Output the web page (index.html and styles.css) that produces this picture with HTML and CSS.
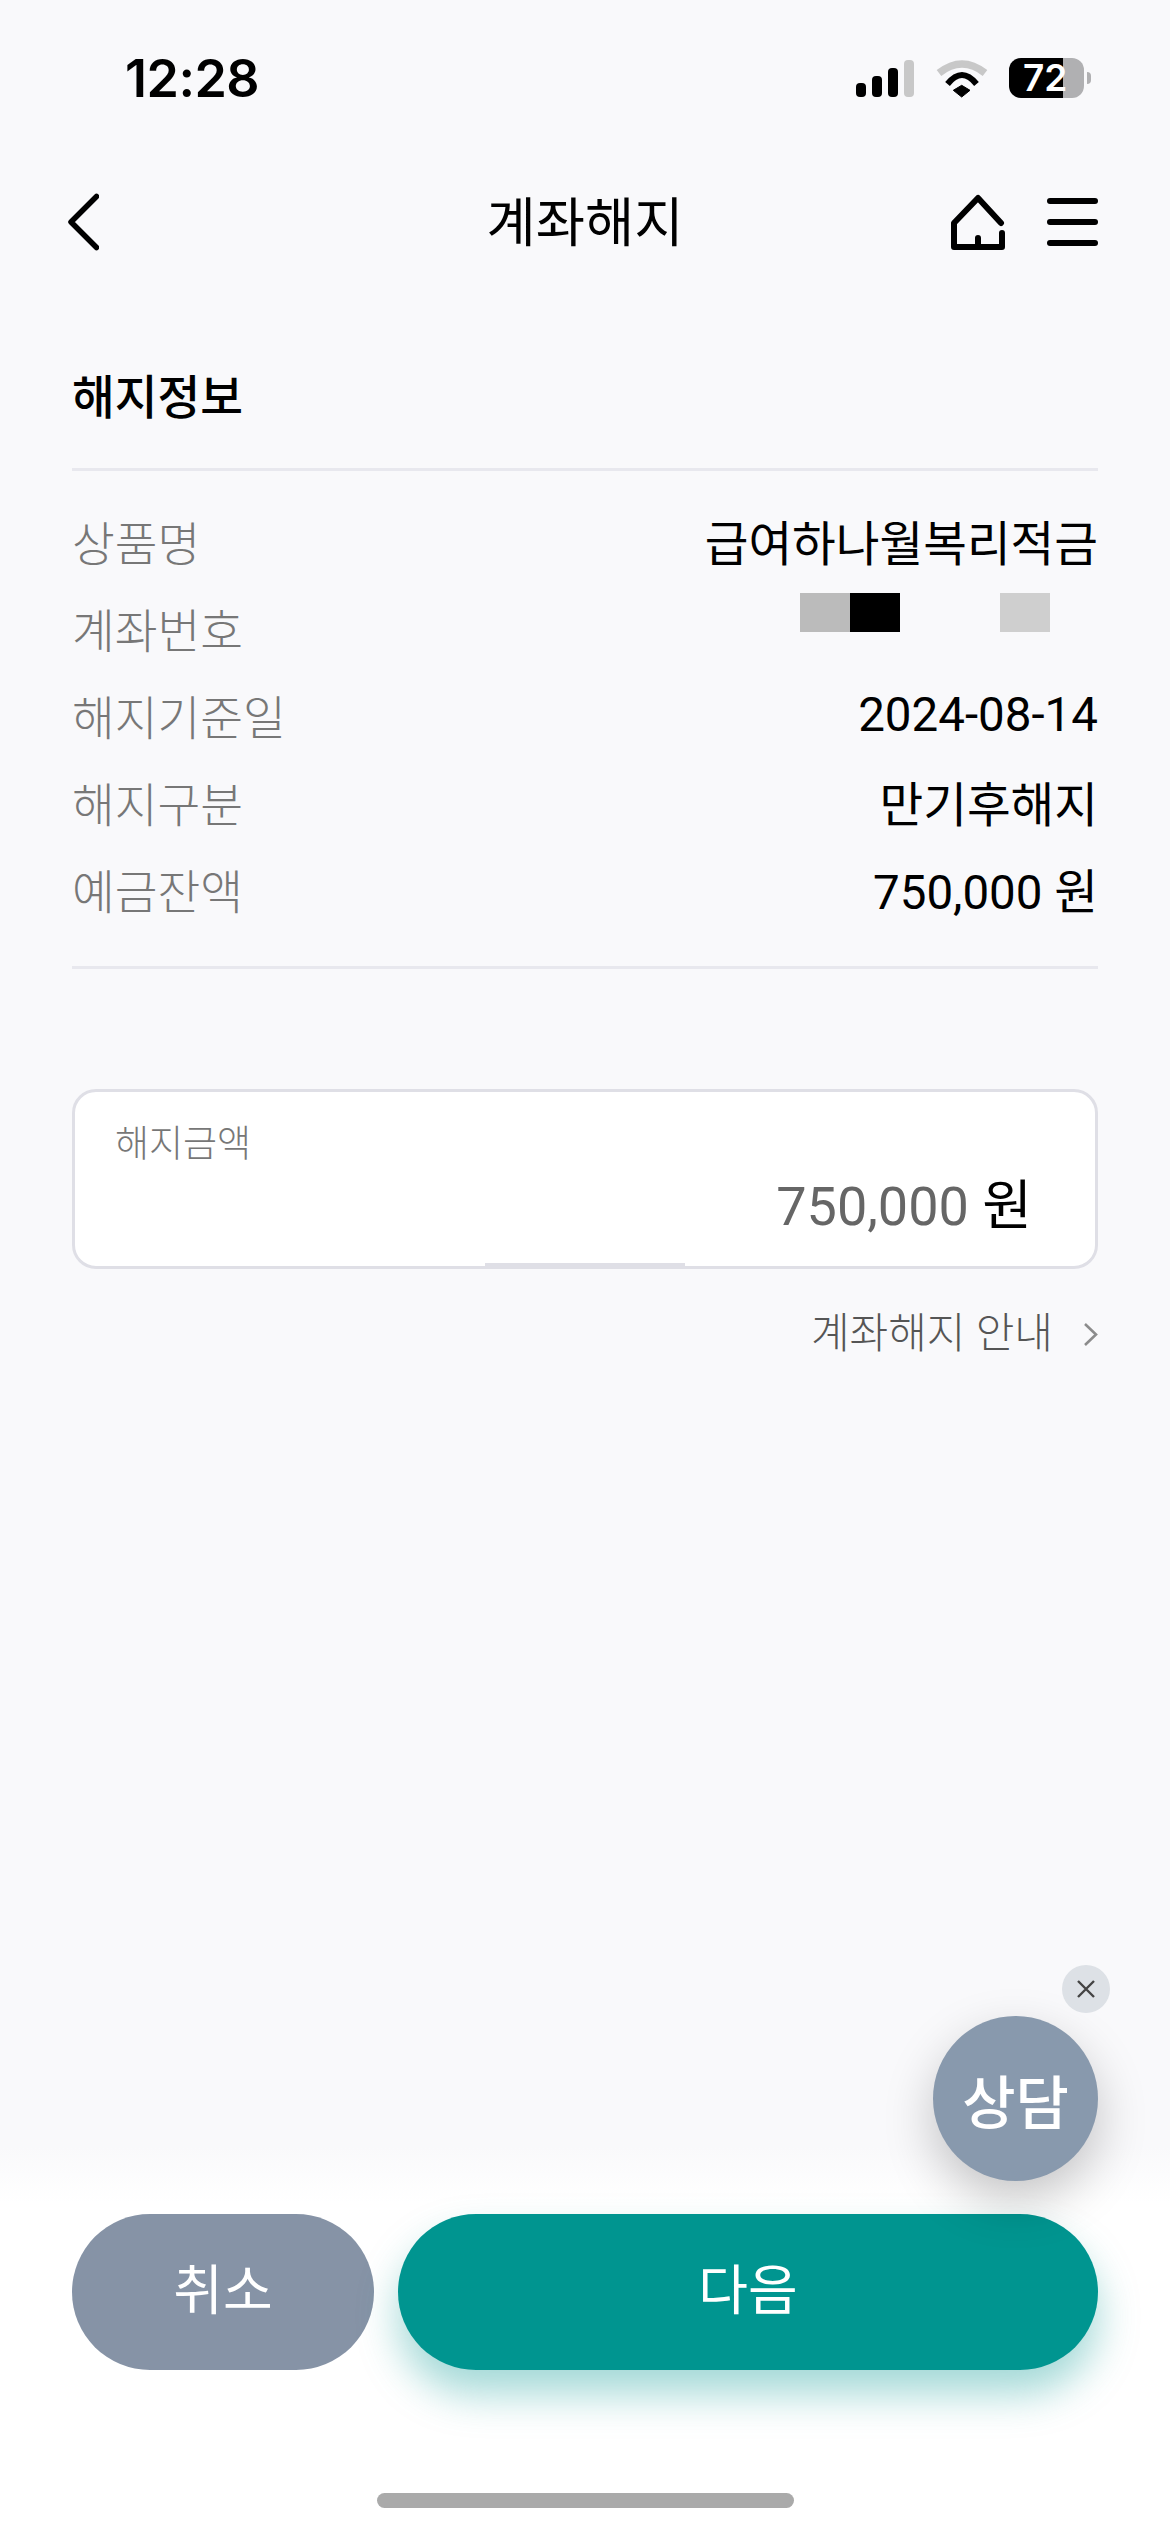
FILE: index.html
```html
<!DOCTYPE html>
<html lang="ko">
<head>
	<meta charset="UTF-8">
	<title>계좌해지</title>
	<link rel="stylesheet" href="styles.css">
</head>
<body>
<div class="screen">
	<div class="status">
		<span class="time">12:28</span>
		<div class="status_icons">
			<div class="signal">
				<i class="s1"></i><i class="s2"></i><i class="s3"></i><i class="s4"></i>
			</div>
			<svg class="wifi" width="52" height="44" viewBox="0 0 52 44">
				<path d="M3 17Q26 -1 49 17" fill="none" stroke="#c8c8c8" stroke-width="7.5"/>
				<path d="M11.5 28Q26 10 40.5 28" fill="none" stroke="#000" stroke-width="6"/>
				<path d="M17.3 34.3L25.7 29.3L34 34.3L25.7 41Z" fill="#000" stroke="#000" stroke-linejoin="round"/>
			</svg>
			<div class="battery"><span>72</span></div>
			<i class="battery_nub"></i>
		</div>
	</div>

	<div class="nav">
		<svg class="back" width="31" height="58" viewBox="0 0 31 58">
			<path d="M28.5 3.5L3 29L28.5 54.5" fill="none" stroke="#000" stroke-width="5.5" stroke-linecap="round" stroke-linejoin="round"/>
		</svg>
		<h1>계좌해지</h1>
		<div class="nav_right">
			<svg width="56" height="56" viewBox="0 0 56 56">
				<path d="M51 29L28 4L4 29V53H52V39M28 53V44" fill="none" stroke="#000" stroke-width="6" stroke-linecap="round" stroke-linejoin="round"/>
			</svg>
			<div class="menu"><i></i><i></i><i></i></div>
		</div>
	</div>

	<div class="content">
		<h2>해지정보</h2>
		<div class="info">
			<div class="row"><span class="key">상품명</span><span class="val">급여하나월복리적금</span></div>
			<div class="row"><span class="key">계좌번호</span>
				<div class="masked">
					<i class="m_gray"></i><i class="m_black"></i><i class="m_none"></i><i class="m_light"></i><i class="m_end"></i>
				</div>
			</div>
			<div class="row"><span class="key">해지기준일</span><span class="val">2024-08-14</span></div>
			<div class="row"><span class="key">해지구분</span><span class="val">만기후해지</span></div>
			<div class="row"><span class="key">예금잔액</span><span class="val">750,000 원</span></div>
		</div>

		<div class="amount">
			<label>해지금액</label>
			<div class="amount_val"><span class="num">750,000</span> <span class="unit">원</span></div>
			<i class="notch"></i>
		</div>
		<div class="guide">
			<span>계좌해지 안내</span>
			<svg width="15" height="25" viewBox="0 0 15 25">
				<path d="M2 2L13 12.5L2 23" fill="none" stroke="#8c8c8c" stroke-width="2.6"/>
			</svg>
		</div>
	</div>

	<div class="footer">
		<div class="buttons">
			<button class="btn_cancel">취소</button>
			<button class="btn_next">다음</button>
		</div>
		<div class="home_bar"></div>
	</div>

	<button class="chat">상담</button>
	<button class="chat_close">
		<svg width="20" height="20" viewBox="0 0 20 20">
			<path d="M2 2L18 18M18 2L2 18" stroke="#444" stroke-width="2.4"/>
		</svg>
	</button>
</div>
</body>
</html>
```
FILE: styles.css
```css
* {
	box-sizing: border-box;
}
html, body {
	margin: 0;
	background: #f9f9fb;
}
body {
	font-family: Roboto, "Noto Sans CJK KR", sans-serif;
	color: #000;
}
i {
	display: block;
}
.screen {
	position: relative;
	width: 1170px;
	height: 2532px;
	overflow: hidden;
	display: flex;
	flex-direction: column;
}

/* status bar */
.status {
	height: 156px;
	padding: 0 79px 0 125px;
	display: flex;
	align-items: center;
	justify-content: space-between;
}
.time {
	font-family: Inter, sans-serif;
	font-weight: 600;
	font-size: 52px;
	letter-spacing: -0.5px;
}
.status_icons {
	display: flex;
	align-items: center;
}
.signal {
	display: flex;
	align-items: flex-end;
	gap: 6px;
	height: 37px;
}
.signal i {
	width: 10px;
	border-radius: 4px;
	background: #000;
}
.s1 { height: 14px; }
.s2 { height: 21px; }
.s3 { height: 29px; }
.signal .s4 { height: 37px; background: #c8c8c8; }
.wifi {
	margin-left: 22px;
}
.battery {
	width: 75px;
	height: 40px;
	margin-left: 21px;
	border-radius: 12px;
	background: linear-gradient(90deg, #000 54px, #b0b0b2 54px);
	color: #fff;
	font-family: Inter, sans-serif;
	font-weight: 600;
	font-size: 37px;
	line-height: 40px;
	padding-left: 14px;
}
.battery_nub {
	width: 4px;
	height: 12px;
	margin-left: 3px;
	border-radius: 0 6px 6px 0;
	background: #b0b0b2;
}

/* top navigation */
.nav {
	height: 132px;
	padding: 4px 72px 0;
	display: grid;
	grid-template-columns: 1fr auto 1fr;
	align-items: center;
}
.back {
	margin: -4px 0 0 -4px;
}
.nav h1 {
	margin: 0;
	font-size: 53.5px;
	font-weight: 400;
	line-height: 1;
}
.nav_right {
	display: flex;
	justify-content: flex-end;
	align-items: center;
	gap: 41px;
	margin-top: -4px;
}
.menu {
	width: 51px;
	display: flex;
	flex-direction: column;
	gap: 15px;
}
.menu i {
	height: 6px;
	border-radius: 3px;
	background: #000;
}

/* content */
.content {
	flex: 1;
	padding: 0 72px;
}
.content h2 {
	margin: 0;
	height: 183px;
	padding-top: 80px;
	border-bottom: 3px solid #e8e8ee;
	font-size: 46.5px;
	font-weight: 500;
	line-height: 60px;
}
.info {
	height: 498px;
	padding-top: 26px;
	border-bottom: 3px solid #e8e8ee;
}
.row {
	height: 87px;
	display: flex;
	justify-content: space-between;
	align-items: center;
}
.key {
	font-size: 46.5px;
	font-weight: 300;
	color: #777;
}
.val {
	font-size: 47.5px;
	font-weight: 400;
}
.masked {
	display: flex;
	align-self: flex-start;
	margin-top: 9px;
}
.masked i {
	width: 50px;
	height: 39px;
}
.m_gray { background: #bbb; }
.m_black { background: #000; }
.masked .m_none { width: 100px; }
.m_light { background: #cfcfcf; }
.masked .m_end { width: 48px; }

.amount {
	position: relative;
	height: 180px;
	margin-top: 120px;
	padding: 30px 63px 0 40px;
	background: #fff;
	border: 3px solid #dfdfe6;
	border-radius: 24px;
}
.amount label {
	display: block;
	font-size: 37px;
	font-weight: 300;
	line-height: 46px;
	color: #777;
}
.amount_val {
	margin-top: 4px;
	text-align: right;
	font-size: 54px;
	line-height: 70px;
}
.num {
	color: #666;
}
.notch {
	position: absolute;
	left: 410px;
	bottom: -1px;
	width: 200px;
	height: 4px;
	background: #dfdfe6;
}
.guide {
	margin-top: 38px;
	display: flex;
	justify-content: flex-end;
	align-items: center;
	gap: 30px;
	font-size: 42px;
	font-weight: 300;
	line-height: 54px;
	color: #555;
}

/* bottom buttons */
.footer {
	height: 385px;
	padding: 67px 72px 0;
	background: linear-gradient(180deg, #f9f9fb 0, #fff 56px);
}
.buttons {
	display: flex;
	gap: 24px;
}
.buttons button {
	height: 156px;
	padding: 0 0 12px;
	border: 0;
	border-radius: 78px;
	color: #fff;
	font-family: "Noto Sans CJK KR", sans-serif;
	font-size: 54px;
	font-weight: 400;
}
.btn_cancel {
	width: 302px;
	background: #8693a6;
}
.btn_next {
	flex: 1;
	background: #009590;
	box-shadow: 0 24px 40px rgba(0, 149, 144, 0.36);
}
.home_bar {
	width: 417px;
	height: 15px;
	margin: 123px auto 0;
	border-radius: 8px;
	background: #aaa;
}

/* floating chat */
.chat {
	position: absolute;
	left: 933px;
	top: 2016px;
	width: 165px;
	height: 165px;
	border: 0;
	border-radius: 50%;
	background: #8899ad;
	color: #fff;
	font-family: "Noto Sans CJK KR", sans-serif;
	font-size: 58px;
	font-weight: 500;
	box-shadow: 0 20px 50px rgba(0, 0, 0, 0.22);
}
.chat_close {
	position: absolute;
	left: 1062px;
	top: 1965px;
	width: 48px;
	height: 48px;
	padding: 0;
	border: 0;
	border-radius: 50%;
	background: #dde1e6;
	display: flex;
	align-items: center;
	justify-content: center;
}
```
